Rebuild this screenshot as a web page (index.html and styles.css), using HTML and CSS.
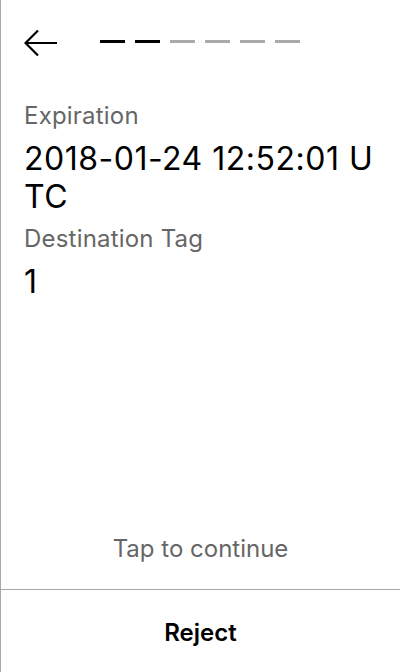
FILE: index.html
```html
<!DOCTYPE html>
<html>
<head>
<meta charset="utf-8">
<link rel="stylesheet" href="styles.css">
</head>
<body>
<div class="screen">
  <header class="header">
    <svg class="back" width="34" height="28" viewBox="0 0 34 28">
      <path d="M33 14H2M14 1.5L1.5 14L14 26.5" fill="none" stroke="#000" stroke-width="2.2"/>
    </svg>
    <div class="steps">
      <span class="step done"></span>
      <span class="step done"></span>
      <span class="step"></span>
      <span class="step"></span>
      <span class="step"></span>
      <span class="step"></span>
    </div>
  </header>
  <main class="content">
    <div class="field">
      <div class="label">Expiration</div>
      <div class="value">2018-01-24 12:52:01 UTC</div>
    </div>
    <div class="field">
      <div class="label">Destination Tag</div>
      <div class="value">1</div>
    </div>
  </main>
  <div class="tap">Tap to continue</div>
  <footer class="footer">
    <button class="reject">Reject</button>
  </footer>
</div>
</body>
</html>
```

FILE: styles.css
```css
html, body {
  margin: 0;
  padding: 0;
  background: #fff;
}
body {
  font-family: Inter, "Noto Sans", sans-serif;
  color: #000;
}
.screen {
  width: 399px;
  height: 672px;
  border-left: 1px solid #a8a8a8;
  display: flex;
  flex-direction: column;
}
.header {
  display: flex;
  align-items: center;
  height: 86px;
  padding-left: 23px;
  box-sizing: border-box;
}
.back {
  display: block;
  width: 34px;
  height: 28px;
}
.steps {
  display: flex;
  gap: 10px;
  margin-left: 42px;
  margin-top: -4px;
}
.step {
  width: 25px;
  height: 3px;
  background: #aaaaaa;
}
.step.done {
  background: #000;
}
.content {
  flex: 1;
  padding: 14px 23px 0 23px;
  display: flex;
  flex-direction: column;
  gap: 7px;
}
.label {
  font-size: 24px;
  line-height: 32px;
  color: #666;
  letter-spacing: 0.2px;
  margin-bottom: 8px;
}
.value {
  font-size: 32px;
  line-height: 38px;
  letter-spacing: 0.5px;
  word-break: break-all;
}
.tap {
  text-align: center;
  font-size: 24px;
  line-height: 32px;
  color: #666;
  padding-bottom: 24px;
}
.footer {
  border-top: 1px solid #a8a8a8;
  height: 83px;
  box-sizing: border-box;
  padding-top: 3px;
  display: flex;
}
.reject {
  flex: 1;
  border: 0;
  background: transparent;
  font-family: Inter, "Noto Sans", sans-serif;
  font-size: 24px;
  font-weight: 600;
  color: #000;
  padding: 0;
}
```
